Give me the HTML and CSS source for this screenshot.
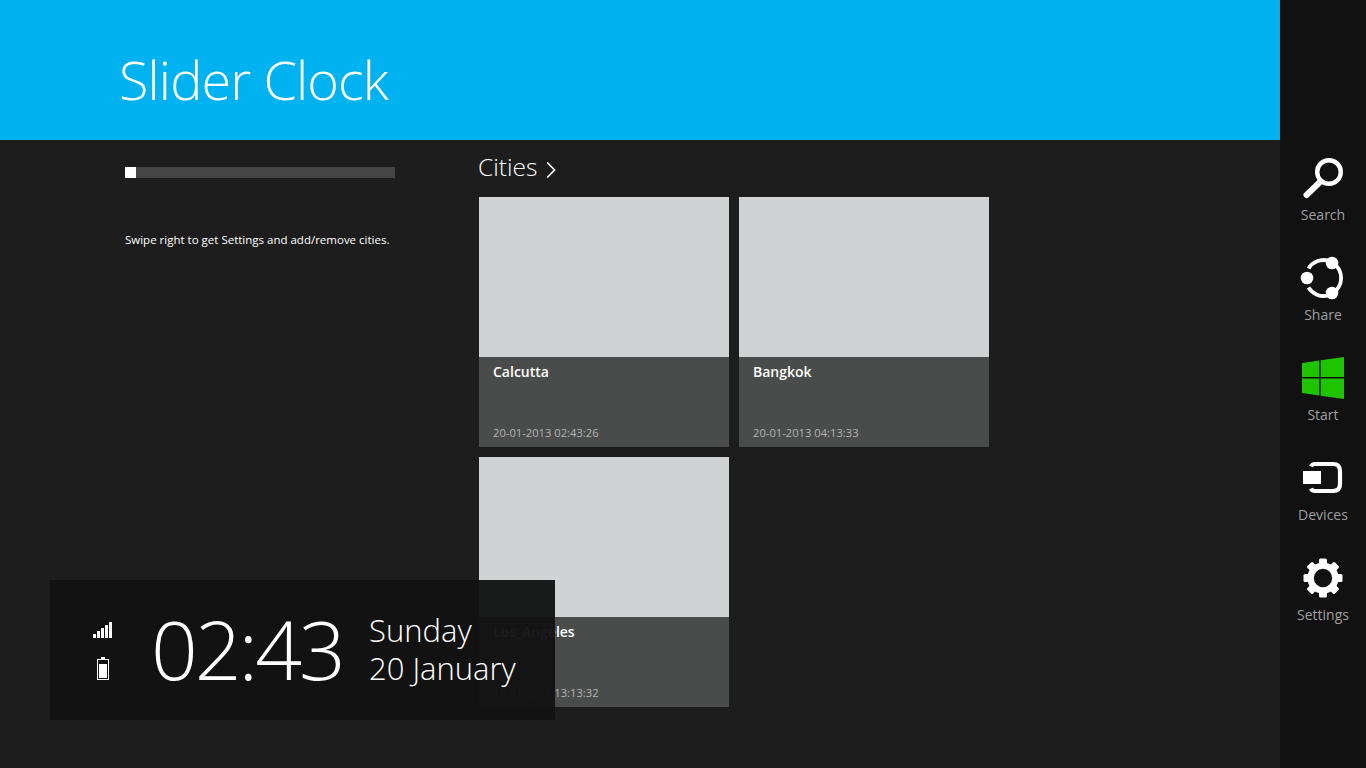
FILE: index.html
```html
<!DOCTYPE html>
<html lang="en">
<head>
    <meta charset="UTF-8">
    <meta name="viewport" content="width=device-width, initial-scale=1.0">
    <title>Slider Clock</title>
    <link rel="stylesheet" href="styles.css">
</head>
<body>

<div class="app">
    <div class="header">
        <h1 class="title">Slider Clock</h1>
    </div>

    <div class="content">
        <!-- Left column -->
        <div class="side">
            <div class="slider"><div class="thumb"></div></div>
            <p class="hint">Swipe right to get Settings and add/remove cities.</p>
        </div>

        <!-- Cities -->
        <div class="cities">
            <h2 class="group-title">Cities
                <svg class="chevron" width="10" height="18" viewBox="0 0 10 18"><path d="M1.2 1.5 L8.6 9 L1.2 16.5" fill="none" stroke="#fff" stroke-width="1.6"/></svg>
            </h2>
            <div class="tiles">
                <div class="tile">
                    <div class="tile-img"></div>
                    <div class="tile-info">
                        <span class="city">Calcutta</span>
                        <span class="stamp">20-01-2013 02:43:26</span>
                    </div>
                </div>
                <div class="tile">
                    <div class="tile-img"></div>
                    <div class="tile-info">
                        <span class="city">Bangkok</span>
                        <span class="stamp">20-01-2013 04:13:33</span>
                    </div>
                </div>
                <div class="tile">
                    <div class="tile-img"></div>
                    <div class="tile-info">
                        <span class="city">Los_Angeles</span>
                        <span class="stamp">19-01-2013 13:13:32</span>
                    </div>
                </div>
            </div>
        </div>
    </div>
</div>

<!-- Charms bar -->
<div class="charms">
    <div class="charm">
        <svg width="46" height="46" viewBox="0 0 46 46">
            <circle cx="29" cy="17" r="11.8" fill="none" stroke="#fff" stroke-width="4.4"/>
            <path d="M19.5 27.5 L6.5 40" stroke="#fff" stroke-width="6" stroke-linecap="round"/>
        </svg>
        <span>Search</span>
    </div>
    <div class="charm">
        <svg width="46" height="46" viewBox="0 0 46 46">
            <g fill="none" stroke="#fff" stroke-width="3.8">
                <path d="M8.5 13.5 A18 18 0 0 1 28 5.5"/>
                <path d="M36.5 11 A18 18 0 0 1 36.5 35"/>
                <path d="M8.5 32.5 A18 18 0 0 0 28 40.5"/>
            </g>
            <circle cx="32" cy="8" r="6.3" fill="#fff"/>
            <circle cx="7" cy="23" r="6.3" fill="#fff"/>
            <circle cx="32" cy="38" r="6.3" fill="#fff"/>
        </svg>
        <span>Share</span>
    </div>
    <div class="charm">
        <svg width="46" height="46" viewBox="0 0 46 46">
            <path fill="#1fc400" d="M2 8 L19.3 5.5 V22 H2 Z M20.7 5.3 L44 2 V22 H20.7 Z M2 23.5 H19.3 V40.5 L2 38 Z M20.7 23.5 H44 V44 L20.7 40.7 Z"/>
        </svg>
        <span>Start</span>
    </div>
    <div class="charm">
        <svg width="46" height="46" viewBox="0 0 46 46">
            <rect x="3" y="16" width="18" height="13" fill="#fff"/>
            <path d="M11 11.5 Q12 9 15 9 H33 Q40 9 40 16 V29 Q40 36 33 36 H15 Q12 36 11 33.5" fill="none" stroke="#fff" stroke-width="4.2"/>
        </svg>
        <span>Devices</span>
    </div>
    <div class="charm">
        <svg width="46" height="46" viewBox="0 0 46 46">
            <circle cx="23" cy="23" r="12.4" fill="none" stroke="#fff" stroke-width="6.4"/>
            <g fill="#fff">
                <rect x="19" y="3.5" width="8" height="8" rx="1.5"/>
                <rect x="19" y="3.5" width="8" height="8" rx="1.5" transform="rotate(45 23 23)"/>
                <rect x="19" y="3.5" width="8" height="8" rx="1.5" transform="rotate(90 23 23)"/>
                <rect x="19" y="3.5" width="8" height="8" rx="1.5" transform="rotate(135 23 23)"/>
                <rect x="19" y="3.5" width="8" height="8" rx="1.5" transform="rotate(180 23 23)"/>
                <rect x="19" y="3.5" width="8" height="8" rx="1.5" transform="rotate(225 23 23)"/>
                <rect x="19" y="3.5" width="8" height="8" rx="1.5" transform="rotate(270 23 23)"/>
                <rect x="19" y="3.5" width="8" height="8" rx="1.5" transform="rotate(315 23 23)"/>
            </g>
        </svg>
        <span>Settings</span>
    </div>
</div>

<!-- Clock overlay -->
<div class="clock">
    <div class="status">
        <svg width="20" height="16" viewBox="0 0 20 16">
            <g fill="#fff">
                <rect x="0" y="12" width="3" height="4"/>
                <rect x="4" y="9" width="3" height="7"/>
                <rect x="8" y="6" width="3" height="10"/>
                <rect x="12" y="3" width="3" height="13"/>
                <rect x="16" y="0" width="3" height="16"/>
            </g>
        </svg>
        <svg width="12" height="23" viewBox="0 0 12 23">
            <rect x="4" y="0" width="4" height="2" fill="#fff"/>
            <rect x="0.5" y="2.5" width="11" height="20" fill="none" stroke="#fff"/>
            <rect x="2" y="7" width="8" height="14" fill="#fff"/>
        </svg>
    </div>
    <div class="time">02:43</div>
    <div class="date">
        <div>Sunday</div>
        <div>20 January</div>
    </div>
</div>

</body>
</html>
```

FILE: styles.css
```css
* {
    box-sizing: border-box;
}
body {
    margin: 0;
    height: 768px;
    overflow: hidden;
    display: flex;
    background-color: #1d1d1d;
    color: #fff;
    font-family: "Open Sans", "Noto Sans", sans-serif;
}
.app {
    flex: 1;
    min-width: 0;
}
.header {
    height: 140px;
    padding-left: 119px;
    background-color: #00b2f0;
}
.title {
    margin: 0;
    font-size: 54px;
    font-weight: 300;
    line-height: 158px;
    height: 140px;
    letter-spacing: -0.9px;
}
.content {
    display: flex;
    padding-left: 125px;
}
.side {
    width: 353px;
    padding-top: 27px;
}
.slider {
    width: 270px;
    height: 11px;
    background-color: #454545;
}
.thumb {
    width: 11px;
    height: 11px;
    background-color: #fff;
}
.hint {
    margin: 54px 0 0;
    font-size: 11.5px;
    line-height: 16px;
    white-space: nowrap;
}
.group-title {
    margin: 0;
    height: 57px;
    padding-bottom: 4px;
    font-size: 24.5px;
    font-weight: 300;
    display: flex;
    align-items: center;
    gap: 9px;
}
.chevron {
    margin-top: 7px;
}
.tiles {
    display: grid;
    grid-template-columns: 250px 250px;
    gap: 10px;
    margin-left: 1px;
}
.tile {
    height: 250px;
    background-color: #4a4c4b;
}
.tile-img {
    height: 160px;
    background-color: #d1d2d4;
}
.tile-info {
    height: 90px;
    padding: 5px 14px 4px;
    display: flex;
    flex-direction: column;
    justify-content: space-between;
}
.city {
    font-size: 14px;
    font-weight: 600;
    line-height: 20px;
}
.stamp {
    font-size: 11.2px;
    line-height: 20px;
    color: #b4b4b4;
}
.charms {
    width: 86px;
    padding-top: 155px;
    background-color: #111;
}
.charm {
    height: 100px;
    display: flex;
    flex-direction: column;
    align-items: center;
    font-size: 14px;
    line-height: 20px;
    color: #a0a0a0;
}
.charm svg {
    display: block;
    margin-bottom: 4px;
}
.clock {
    position: absolute;
    left: 50px;
    top: 580px;
    width: 505px;
    height: 140px;
    display: flex;
    align-items: center;
    background-color: rgba(18, 18, 18, 0.96);
}
.status {
    width: 100px;
    padding: 2px 0 0 43px;
    display: flex;
    flex-direction: column;
    align-items: flex-start;
    gap: 19px;
}
.status svg:last-child {
    margin-left: 4px;
}
.time {
    width: 219px;
    margin-top: -4px;
    padding-left: 1px;
    font-size: 82px;
    font-weight: 300;
    line-height: 100px;
    letter-spacing: -3px;
    white-space: nowrap;
}
.date {
    margin-top: -2px;
    font-size: 31px;
    font-weight: 300;
    line-height: 38px;
}
```
